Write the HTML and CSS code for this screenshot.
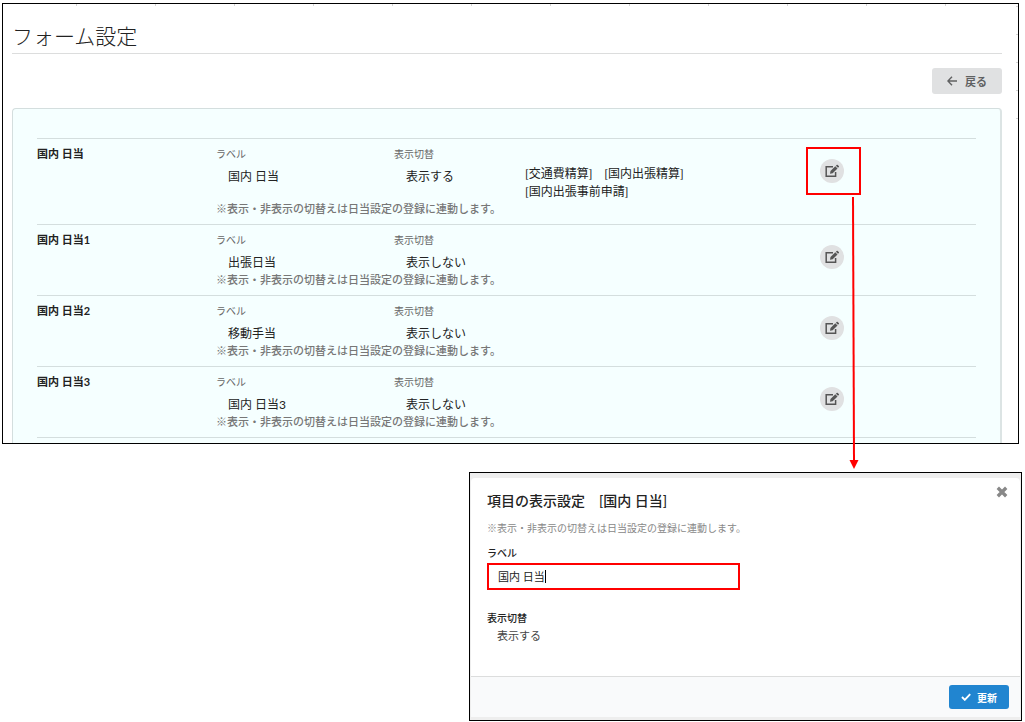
FILE: index.html
```html
<!DOCTYPE html>
<html lang="ja">
<head>
<meta charset="utf-8">
<meta name="viewport" content="width=device-width, initial-scale=1">
<title>フォーム設定</title>
<link rel="stylesheet" href="styles.css">
</head>
<body>
<svg class="sprite" aria-hidden="true">
  <symbol id="icon-edit" viewBox="0 0 14 14">
    <path d="M8 2.7H1.2v9.6h9.4V8" fill="none" stroke="currentColor" stroke-width="1.5"/>
    <path d="M5 9.8l.5-2.8 4.8-4.7 2.2 2.2-4.8 4.8z" fill="currentColor"/>
    <path d="M10.9 1.7l.8-.8c.3-.3.7-.3 1 0l1.1 1.1c.3.3.3.7 0 1l-.8.8z" fill="currentColor"/>
  </symbol>
</svg>

<main class="panel">
  <h1 class="page-title">フォーム設定</h1>
  <div class="toolbar">
    <button class="btn btn-back" type="button">
      <svg class="icon-back" viewBox="0 0 10 10" aria-hidden="true"><path d="M5 .8L.9 5 5 9.2M1 5h9" fill="none" stroke="currentColor" stroke-width="1.4"/></svg>
      戻る
    </button>
  </div>

  <section class="segment">
    <div class="row">
      <h2 class="row-name">国内 日当</h2>
      <dl class="field"><dt>ラベル</dt><dd>国内 日当</dd></dl>
      <dl class="field"><dt>表示切替</dt><dd>表示する</dd></dl>
      <p class="forms">[交通費精算]　[国内出張精算]<br>[国内出張事前申請]</p>
      <div class="action">
        <button class="btn-edit" type="button" aria-label="編集"><svg viewBox="0 0 14 14"><use href="#icon-edit"/></svg></button>
        <span class="callout"></span>
        <svg class="arrow" viewBox="0 0 12 272" aria-hidden="true"><path d="M5 0L6 264" stroke="#f00" stroke-width="2"/><path d="M1.500 263h9L6 272z" fill="#f00"/></svg>
      </div>
      <p class="note">※表示・非表示の切替えは日当設定の登録に連動します。</p>
    </div>
    <div class="row">
      <h2 class="row-name">国内 日当1</h2>
      <dl class="field"><dt>ラベル</dt><dd>出張日当</dd></dl>
      <dl class="field"><dt>表示切替</dt><dd>表示しない</dd></dl>
      <div class="action">
        <button class="btn-edit" type="button" aria-label="編集"><svg viewBox="0 0 14 14"><use href="#icon-edit"/></svg></button>
      </div>
      <p class="note">※表示・非表示の切替えは日当設定の登録に連動します。</p>
    </div>
    <div class="row">
      <h2 class="row-name">国内 日当2</h2>
      <dl class="field"><dt>ラベル</dt><dd>移動手当</dd></dl>
      <dl class="field"><dt>表示切替</dt><dd>表示しない</dd></dl>
      <div class="action">
        <button class="btn-edit" type="button" aria-label="編集"><svg viewBox="0 0 14 14"><use href="#icon-edit"/></svg></button>
      </div>
      <p class="note">※表示・非表示の切替えは日当設定の登録に連動します。</p>
    </div>
    <div class="row">
      <h2 class="row-name">国内 日当3</h2>
      <dl class="field"><dt>ラベル</dt><dd>国内 日当3</dd></dl>
      <dl class="field"><dt>表示切替</dt><dd>表示しない</dd></dl>
      <div class="action">
        <button class="btn-edit" type="button" aria-label="編集"><svg viewBox="0 0 14 14"><use href="#icon-edit"/></svg></button>
      </div>
      <p class="note">※表示・非表示の切替えは日当設定の登録に連動します。</p>
    </div>
  </section>
</main>

<div class="modal-area">
  <form class="modal" role="dialog" aria-labelledby="modal-title">
    <header class="modal-header">
      <h2 class="modal-title" id="modal-title">項目の表示設定　[国内 日当]</h2>
      <button class="btn-close" type="button" aria-label="閉じる"><svg viewBox="0 0 10 10"><path d="M1.500 1.500l7 7M8.500 1.500l-7 7" stroke="currentColor" stroke-width="2.800"/></svg></button>
    </header>
    <div class="modal-body">
      <p class="modal-note">※表示・非表示の切替えは日当設定の登録に連動します。</p>
      <label class="modal-label" for="label-input">ラベル</label>
      <div class="input-box">
        <input id="label-input" type="text" value="国内 日当">
        <span class="caret"></span>
      </div>
      <h3 class="modal-label">表示切替</h3>
      <p class="modal-value">表示する</p>
    </div>
    <footer class="modal-footer">
      <button class="btn btn-update" type="button">
        <svg class="icon-check" viewBox="0 0 10 8" aria-hidden="true"><path d="M1 4l2.800 2.800L9.200 1.200" fill="none" stroke="currentColor" stroke-width="1.900"/></svg>
        更新
      </button>
    </footer>
  </form>
</div>
</body>
</html>
```
FILE: styles.css
```css
* { box-sizing: border-box; }

body {
  margin: 0;
  padding: 3px 0 0;
  background: #fff;
  color: #222;
  font: 12px/18px Lato, "Noto Sans CJK JP", sans-serif;
}

h1, h2, h3, p, dl, dd { margin: 0; }

button { font-family: inherit; cursor: pointer; }

.sprite { position: absolute; width: 0; height: 0; }

.panel {
  margin: 0 6px 0 2px;
  padding: 16px 16px 0 9px;
  border: 1px solid #000;
  background:
    repeating-linear-gradient(90deg, transparent 0 73px, #d4d4d4 73px 74px, transparent 74px 79px) 0 0 / 100% 2px no-repeat,
    repeating-linear-gradient(transparent 0 2px, #d4d4d4 2px 3px, transparent 3px 28px) 100% 0 / 2px 116px no-repeat;
}

.page-title {
  padding-bottom: 1px;
  border-bottom: 1px solid #dcdddd;
  font-size: 21px;
  font-weight: 300;
  line-height: 32px;
}

.toolbar {
  display: flex;
  justify-content: flex-end;
  padding: 14px 0;
}

.btn {
  display: flex;
  align-items: center;
  border: 0;
  border-radius: 3px;
  font-weight: 700;
}

.btn-back {
  gap: 8px;
  height: 26px;
  padding: 0 15px;
  background: #e0e1e2;
  color: #606162;
  font-size: 11px;
}

.icon-back { width: 10px; height: 10px; }

.segment {
  padding: 29px 24px 5px;
  border: 1px solid #d4dede;
  border-right: 2px solid #dce4e4;
  border-bottom: 0;
  border-radius: 4px 4px 0 0;
  background: #f5ffff;
}

.row {
  display: grid;
  grid-template-columns: 179fr 178fr 131fr 295fr 156fr;
  padding: 9px 0 7px;
  border-top: 1px solid #d4dede;
}

.row:last-child { border-bottom: 1px solid #d4dede; }

.row-name {
  font-size: 11px;
  font-weight: 700;
  line-height: 12px;
}

.field dt {
  color: #666;
  font-size: 10px;
  line-height: 12px;
}

.field dd {
  margin: 8px 0 0 12px;
  white-space: nowrap;
}

.forms { padding-top: 17px; }

.action {
  position: relative;
  grid-column: 5;
  height: 38px;
  padding-top: 11px;
}

.btn-edit {
  display: grid;
  place-items: center;
  width: 24px;
  height: 24px;
  padding: 0;
  border: 0;
  border-radius: 50%;
  background: #e0e1e2;
  color: #555;
}

.btn-edit svg { width: 14px; height: 14px; }

.callout {
  position: absolute;
  top: -1px;
  left: -14px;
  width: 55px;
  height: 48px;
  border: 2px solid #f00;
}

.arrow {
  position: absolute;
  top: 49px;
  left: 28px;
  width: 12px;
  height: 272px;
}

.note {
  grid-column: 2 / 5;
  color: #777;
  font-size: 11px;
  font-weight: 500;
  line-height: 16px;
}

.modal-area {
  display: grid;
  grid-template-columns: 469fr 553fr 3fr;
  padding-top: 28px;
}

.modal {
  grid-column: 2;
  padding: 5px 1px 3px;
  border: 1px solid #000;
  background: #eee;
}

.modal-header {
  display: flex;
  align-items: flex-start;
  justify-content: space-between;
  padding: 8px 12px 0 16px;
  border-radius: 4px 4px 0 0;
  background: #fff;
}

.modal-title {
  padding-top: 5px;
  font-size: 14px;
  font-weight: 500;
  line-height: 20px;
}

.btn-close {
  display: flex;
  padding: 0;
  border: 0;
  background: none;
  color: #888;
}

.btn-close svg { width: 12px; height: 12px; }

.modal-body {
  padding: 9px 16px 31px;
  background: #fff;
}

.modal-note {
  margin-bottom: 10px;
  color: #888;
  font-size: 10px;
  line-height: 16px;
}

.modal-label {
  display: block;
  font-size: 10px;
  font-weight: 500;
  line-height: 14px;
}

.input-box {
  display: flex;
  align-items: center;
  width: 253px;
  height: 27px;
  margin: 3px 0 21px;
  padding-left: 9px;
  border: 2px solid #f00;
}

.input-box input {
  field-sizing: content;
  padding: 0;
  border: 0;
  outline: 0;
  background: none;
  color: #222;
  font: inherit;
  font-size: 11px;
}

.caret { width: 1px; height: 13px; background: #000; }

.modal-value {
  margin: 2px 0 0 10px;
  color: #444;
  font-size: 11px;
}

.modal-footer {
  display: flex;
  justify-content: flex-end;
  padding: 8px 11px;
  border-top: 1px solid #dcdddd;
  background: #f9fafb;
}

.btn-update {
  gap: 6px;
  height: 24px;
  padding: 0 12px;
  background: #2185d0;
  color: #fff;
  font-size: 10px;
}

.icon-check { width: 10px; height: 8px; }
```
